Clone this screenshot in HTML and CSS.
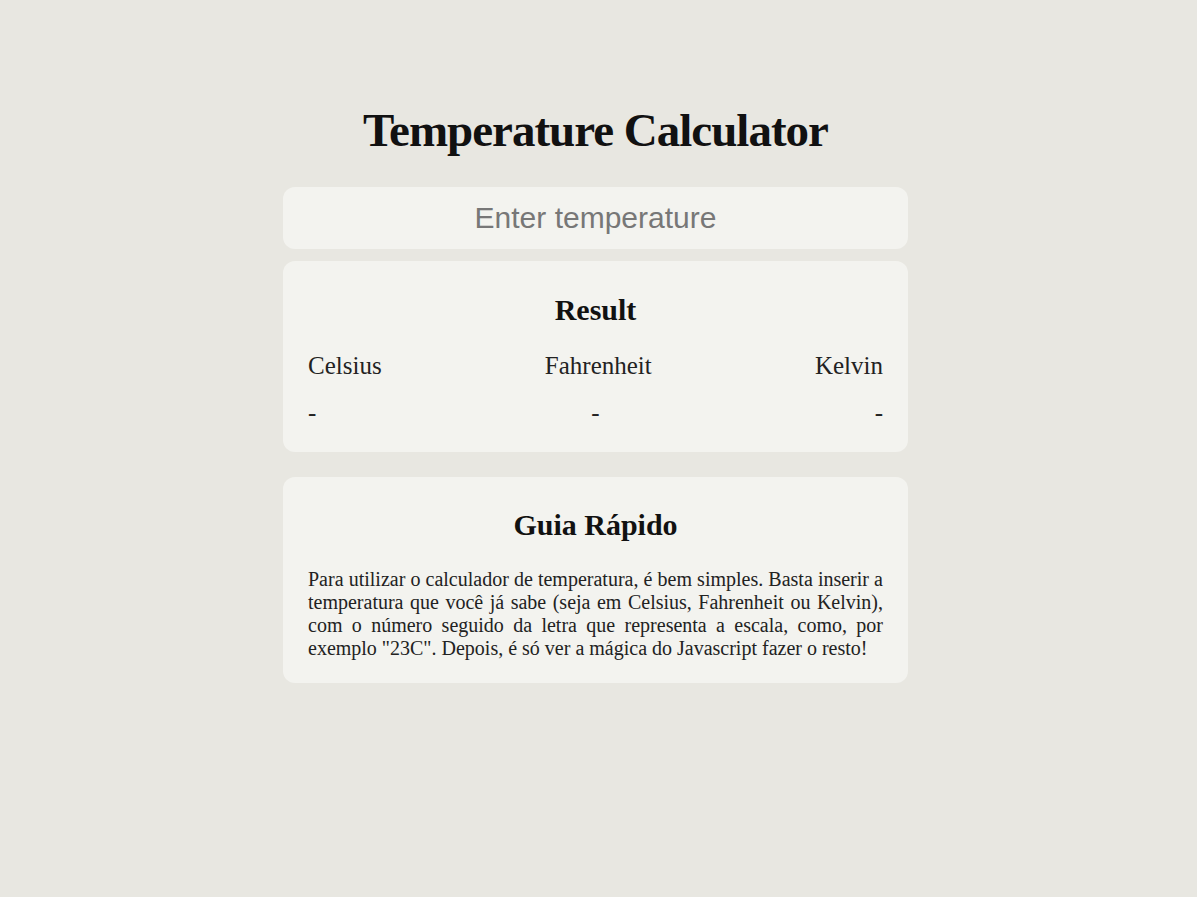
FILE: index.html
```html
<!DOCTYPE html>
<html lang="pt">
<head>
<meta charset="utf-8">
<title>Temperature Calculator</title>
<link rel="stylesheet" href="styles.css">
</head>
<body>
<main class="app">
  <h1 class="title">Temperature Calculator</h1>
  <input class="temp-input" type="text" placeholder="Enter temperature">
  <section class="card result">
    <h2 class="card-title">Result</h2>
    <div class="row labels">
      <span>Celsius</span>
      <span>Fahrenheit</span>
      <span>Kelvin</span>
    </div>
    <div class="row values">
      <span>-</span>
      <span>-</span>
      <span>-</span>
    </div>
  </section>
  <section class="card guide">
    <h2 class="card-title">Guia Rápido</h2>
    <p class="guide-text">Para utilizar o calculador de temperatura, é bem simples. Basta inserir a temperatura que você já sabe (seja em Celsius, Fahrenheit ou Kelvin), com o número seguido da letra que representa a escala, como, por exemplo "23C". Depois, é só ver a mágica do Javascript fazer o resto!</p>
  </section>
</main>
</body>
</html>
```
FILE: styles.css
```css
html, body {
  margin: 0;
  padding: 0;
}
body {
  background: #e8e7e1;
  font-family: "Liberation Serif", "Times New Roman", serif;
  color: #222;
  padding: 103px 6px 0 0;
}
.app {
  width: 625px;
  margin: 0 auto;
  display: flex;
  flex-direction: column;
}
.title {
  margin: 0 0 30px;
  font-size: 47px;
  letter-spacing: -1px;
  font-weight: bold;
  text-align: center;
  color: #111;
}
.temp-input {
  box-sizing: border-box;
  height: 62px;
  width: 100%;
  border: none;
  border-radius: 12px;
  background: #f3f3ef;
  font-family: "Liberation Sans", Arial, sans-serif;
  font-size: 30px;
  text-align: center;
  color: #333;
  outline: none;
  padding: 0 10px;
}
.temp-input::placeholder {
  color: #777;
}
.card {
  background: #f3f3ef;
  border-radius: 12px;
  padding: 0 25px;
}
.card-title {
  margin: 0;
  font-size: 30px;
  font-weight: bold;
  text-align: center;
  color: #111;
}
.result {
  margin-top: 12px;
  padding-top: 32px;
  padding-bottom: 24.5px;
}
.row {
  display: flex;
  justify-content: space-between;
  font-size: 25px;
}
.labels {
  margin-top: 25px;
}
.values {
  margin-top: 19px;
}
.guide {
  margin-top: 25px;
  padding-top: 31.5px;
  padding-bottom: 23.5px;
}
.guide-text {
  margin: 25.5px 0 0;
  font-size: 20px;
  line-height: 23px;
  text-align: justify;
}
```
